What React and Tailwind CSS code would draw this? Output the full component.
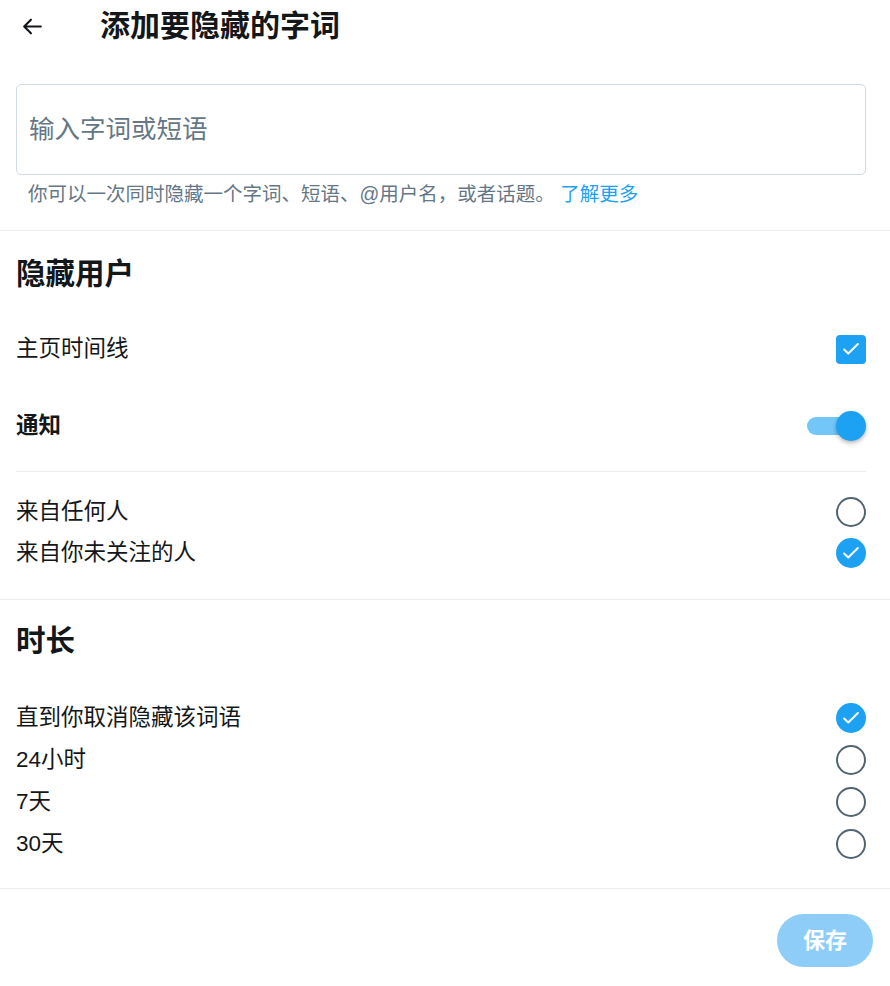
import React, { useState } from 'react';

const font = { fontFamily: '"Liberation Sans", "Noto Sans CJK SC", sans-serif' };

const Check = () => (
    <svg viewBox="0 0 24 24" className="w-[22px] h-[22px]" fill="none" stroke="white" strokeWidth="2.2" strokeLinecap="round" strokeLinejoin="round">
        <path d="M4.5 12.5l4.5 4.5L19.5 6.5" />
    </svg>
);

const Radio = ({ checked, onClick }) => (
    checked ? (
        <button onClick={onClick} className="w-[30px] h-[30px] rounded-full bg-[#1da1f2] flex items-center justify-center">
            <Check />
        </button>
    ) : (
        <button onClick={onClick} className="w-[30px] h-[30px] rounded-full border-[2.5px] border-[#536471]" />
    )
);

const Row = ({ label, children, bold, className = '' }) => (
    <div className={`flex items-center justify-between ${className}`}>
        <span className={`text-[22.5px] leading-[30px] text-[#14171a] ${bold ? 'font-bold' : ''}`}>{label}</span>
        {children}
    </div>
);

const App = () => {
    const [home, setHome] = useState(true);
    const [notify, setNotify] = useState(true);
    const [from, setFrom] = useState('notFollowing');
    const [duration, setDuration] = useState('forever');

    const durations = [
        { id: 'forever', label: '直到你取消隐藏该词语' },
        { id: '24h', label: '24小时' },
        { id: '7d', label: '7天' },
        { id: '30d', label: '30天' },
    ];

    return (
        <div className="w-[890px] min-h-[986px] bg-white" style={font}>
            {/* Header */}
            <div className="h-[52px] flex items-center pl-5">
                <svg viewBox="0 0 24 24" className="w-[25px] h-[25px]" fill="none" stroke="#14171a" strokeWidth="2" strokeLinecap="round" strokeLinejoin="round">
                    <path d="M20 12H4M10.5 5.5L4 12l6.5 6.5" />
                </svg>
                <h1 className="ml-[55px] text-[30px] leading-[40px] font-bold text-[#14171a]">添加要隐藏的字词</h1>
            </div>

            {/* Input */}
            <div className="pl-4 pr-6 mt-[32px]">
                <div className="h-[91px] border border-[#d3dae0] rounded-[5px] flex items-center pl-[12px]">
                    <input
                        placeholder="输入字词或短语"
                        className="w-full outline-none text-[25.5px] text-[#14171a] placeholder:text-[#657786] bg-transparent"
                    />
                </div>
                <p className="mt-[6px] pl-[12px] text-[19.5px] leading-[26px] text-[#657786]">
                    你可以一次同时隐藏一个字词、短语、@用户名，或者话题。 <a className="text-[#1da1f2]">了解更多</a>
                </p>
            </div>
            <div className="mt-[23px] border-t border-[#ebeef0]" />

            {/* Hide users */}
            <div className="pl-4 pr-6">
                <h2 className="mt-[23px] h-[40px] flex items-center text-[29.5px] font-bold text-[#14171a]">隐藏用户</h2>
                <Row label="主页时间线" className="mt-[27px] h-[56px]">
                    <button onClick={() => setHome(!home)} className={`w-[30px] h-[29px] rounded-[4px] flex items-center justify-center ${home ? 'bg-[#1da1f2]' : 'border-2 border-[#536471]'}`}>
                        {home && <Check />}
                    </button>
                </Row>
                <Row label="通知" bold className="mt-[21px] h-[56px]">
                    <button onClick={() => setNotify(!notify)} className="relative w-[60px] h-[30px] flex items-center">
                        <span className={`absolute left-[1px] w-[43px] h-[18px] rounded-full ${notify ? 'bg-[#72c6f8]' : 'bg-[#c4cfd6]'}`} />
                        <span className={`absolute top-0 w-[30px] h-[30px] rounded-full shadow-[0_2px_4px_rgba(0,0,0,0.3)] ${notify ? 'right-0 bg-[#1da1f2]' : 'left-0 bg-white'}`} />
                    </button>
                </Row>
                <div className="mt-[17px] border-t border-[#ebeef0]" />
                <div className="pt-[19px]">
                    <Row label="来自任何人" className="h-[41px]">
                        <Radio checked={from === 'anyone'} onClick={() => setFrom('anyone')} />
                    </Row>
                    <Row label="来自你未关注的人" className="h-[41px]">
                        <Radio checked={from === 'notFollowing'} onClick={() => setFrom('notFollowing')} />
                    </Row>
                </div>
            </div>
            <div className="mt-[26px] border-t border-[#ebeef0]" />

            {/* Duration */}
            <div className="pl-4 pr-6">
                <h2 className="mt-[21px] h-[40px] flex items-center text-[29.5px] font-bold text-[#14171a]">时长</h2>
                <div className="mt-[36px]">
                    {durations.map((d) => (
                        <Row key={d.id} label={d.label} className="h-[42px]">
                            <Radio checked={duration === d.id} onClick={() => setDuration(d.id)} />
                        </Row>
                    ))}
                </div>
            </div>
            <div className="mt-[23px] border-t border-[#ebeef0]" />

            {/* Footer */}
            <div className="flex justify-end pr-[17px] pt-[25px]">
                <button className="w-[96px] h-[53px] rounded-full bg-[#8ecdf8] text-white text-[22px] font-bold">保存</button>
            </div>
        </div>
    );
};

export default App;
